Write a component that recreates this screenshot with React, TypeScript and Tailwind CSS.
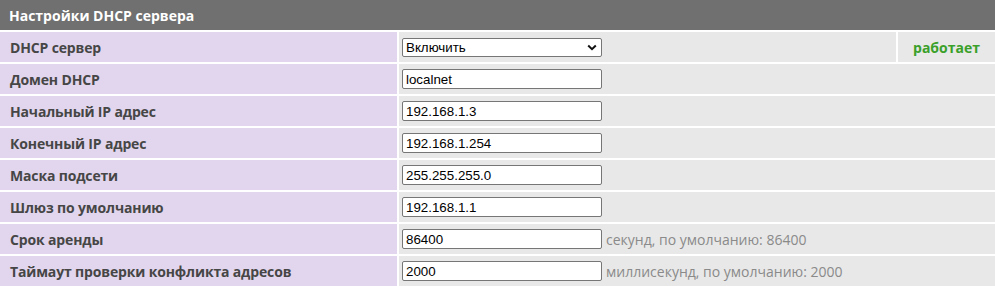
import React from "react";

type Row = {
  label: string;
  value: string;
  hint?: string;
};

const rows: Row[] = [
  { label: "Домен DHCP", value: "localnet" },
  { label: "Начальный IP адрес", value: "192.168.1.3" },
  { label: "Конечный IP адрес", value: "192.168.1.254" },
  { label: "Маска подсети", value: "255.255.255.0" },
  { label: "Шлюз по умолчанию", value: "192.168.1.1" },
  { label: "Срок аренды", value: "86400", hint: "секунд, по умолчанию: 86400" },
  { label: "Таймаут проверки конфликта адресов", value: "2000", hint: "миллисекунд, по умолчанию: 2000" },
];

const Label = ({ children }: { children: React.ReactNode }) => (
  <div className="w-[397px] shrink-0 bg-[#e2d6ee] px-[10px] flex items-center text-[14px] tracking-[-0.15px] font-bold text-[#464646]">
    {children}
  </div>
);

export default function App() {
  return (
    <div className="w-[995px] h-[286px] bg-white flex flex-col gap-[2px] font-['Open_Sans',sans-serif] overflow-hidden">
      {/* Header */}
      <div className="h-[30px] shrink-0 bg-[#707070] px-[9px] flex items-center text-[14px] font-bold text-white">
        Настройки DHCP сервера
      </div>

      {/* DHCP server row with status */}
      <div className="h-[30px] shrink-0 flex gap-[2px]">
        <Label>DHCP сервер</Label>
        <div className="flex-1 bg-[#e8e8e8] pl-[3px] flex items-center">
          <div className="relative w-[200px] h-[19px]">
            <select
              defaultValue="on"
              className="block w-full h-full appearance-none bg-white border border-[#767676] rounded-[2px] pl-[3px] py-0 text-[13.33px] leading-[17px] text-black font-['Liberation_Sans',Arial,sans-serif] outline-none"
            >
              <option value="on">Включить</option>
              <option value="off">Выключить</option>
            </select>
            <svg
              className="absolute right-[5px] top-[6px] pointer-events-none"
              width="10"
              height="7"
              viewBox="0 0 10 7"
            >
              <path d="M1.2 1.5 L5 5.2 L8.8 1.5" fill="none" stroke="#111" strokeWidth="2" />
            </svg>
          </div>
        </div>
        <div className="w-[97px] shrink-0 bg-[#e8e8e8] flex items-center justify-center text-[14px] font-bold text-[#3aa02a]">
          работает
        </div>
      </div>

      {rows.map((r) => (
        <div key={r.label} className="h-[30px] shrink-0 flex gap-[2px]">
          <Label>{r.label}</Label>
          <div className="flex-1 bg-[#e8e8e8] pl-[3px] flex items-center">
            <input
              type="text"
              defaultValue={r.value}
              className="w-[200px] h-[20px] bg-white border border-[#767676] rounded-[2px] px-[3px] text-[13.33px] text-black font-['Liberation_Sans',Arial,sans-serif] outline-none"
            />
            {r.hint && (
              <span className="ml-[4px] text-[14px] text-[#8a8a8a]">{r.hint}</span>
            )}
          </div>
        </div>
      ))}
    </div>
  );
}
